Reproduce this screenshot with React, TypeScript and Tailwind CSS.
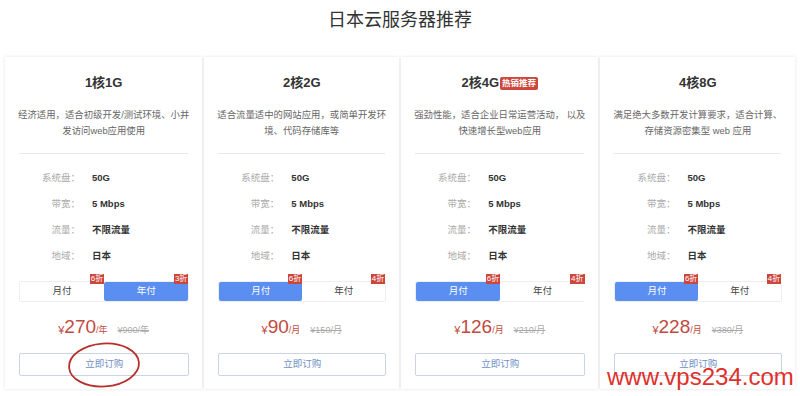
import React from 'react';

interface Plan {
  name: string;
  hot?: boolean;
  desc: string[];
  yearly: boolean;
  price: string;
  unit: string;
  original: string;
  monthOff: string;
  yearOff: string;
}

const plans: Plan[] = [
  {
    name: '1核1G',
    desc: ['经济适用，适合初级开发/测试环境、小并', '发访问web应用使用'],
    yearly: true,
    price: '270',
    unit: '/年',
    original: '¥900/年',
    monthOff: '6折',
    yearOff: '3折',
  },
  {
    name: '2核2G',
    desc: ['适合流量适中的网站应用，或简单开发环', '境、代码存储库等'],
    yearly: false,
    price: '90',
    unit: '/月',
    original: '¥150/月',
    monthOff: '6折',
    yearOff: '4折',
  },
  {
    name: '2核4G',
    hot: true,
    desc: ['强劲性能，适合企业日常运营活动， 以及', '快速增长型web应用'],
    yearly: false,
    price: '126',
    unit: '/月',
    original: '¥210/月',
    monthOff: '6折',
    yearOff: '4折',
  },
  {
    name: '4核8G',
    desc: ['满足绝大多数开发计算要求，适合计算、', '存储资源密集型 web 应用'],
    yearly: false,
    price: '228',
    unit: '/月',
    original: '¥380/月',
    monthOff: '6折',
    yearOff: '4折',
  },
];

const specs = [
  ['系统盘：', '50G'],
  ['带宽：', '5 Mbps'],
  ['流量：', '不限流量'],
  ['地域：', '日本'],
];

const Badge = ({ text }: { text: string }) => (
  <span className="absolute right-0 top-[-8px] bg-[#cc463c] px-[1px] text-[8px] leading-[10px] text-white">
    {text}
  </span>
);

const PlanCard = ({ plan }: { plan: Plan }) => (
  <div className="flex flex-1 flex-col bg-white px-[13px] pb-[13px] pt-[17px] shadow-[0_0_3px_rgba(0,0,0,0.12)]">
    <div className="flex h-[18px] items-center justify-center">
      <span className="text-[13px] font-bold text-[#333]">{plan.name}</span>
      {plan.hot && (
        <span className="ml-[1px] rounded-[2px] bg-[#cc463c] px-[2px] text-[8.5px] font-bold leading-[13px] text-white">
          热销推荐
        </span>
      )}
    </div>
    <div className="mt-[15px] text-center text-[9.4px] leading-[16px] text-[#666]">
      {plan.desc.map((line) => (
        <div key={line} className="whitespace-nowrap">{line}</div>
      ))}
    </div>
    <div className="mx-[1px] mt-[14px] h-px bg-[#e8e8e8]" />
    <div className="mt-[11px] flex flex-col">
      {specs.map(([label, value]) => (
        <div key={label} className="flex h-[26px] items-center text-[9.5px]">
          <span className="w-[62px] text-right text-[#aaa]">{label}</span>
          <span className="ml-[12px] font-bold text-[#333]">{value}</span>
        </div>
      ))}
    </div>
    <div className="ml-[1px] mt-[12px] flex h-[21px] rounded-[2px] border border-[#eee] text-[9.5px]">
      <div
        className={`relative flex flex-1 items-center justify-center ${
          plan.yearly ? 'bg-white text-[#444]' : 'rounded-[2px] bg-[#5a8ef0] text-white'
        }`}
      >
        月付
        <Badge text={plan.monthOff} />
      </div>
      <div
        className={`relative flex flex-1 items-center justify-center ${
          plan.yearly ? 'rounded-[2px] bg-[#5a8ef0] text-white' : 'bg-white text-[#444]'
        }`}
      >
        年付
        <Badge text={plan.yearOff} />
      </div>
    </div>
    <div className="mt-[14px] flex h-[24px] items-end justify-center pb-[3px] text-[#bf4a42]">
      <span className="text-[11px] leading-[14px]">¥</span>
      <span className="text-[19px] leading-[20px]">{plan.price}</span>
      <span className="text-[9px] leading-[14px]">{plan.unit}</span>
      <span className="ml-[10px] text-[9px] leading-[14px] text-[#aaa] line-through">{plan.original}</span>
    </div>
    <button className="ml-[1px] mt-[13px] flex h-[23px] items-center justify-center rounded-[2px] border border-[#c9d5e4] bg-white text-[9.5px] text-[#6f8fc4]">
      立即订购
    </button>
  </div>
);

export default function App() {
  return (
    <div
      className="relative h-[396px] w-[800px] overflow-hidden bg-white"
      style={{ fontFamily: '"Liberation Sans", "Noto Sans CJK SC", sans-serif' }}
    >
      <h1 className="pt-[8px] text-center text-[18px] leading-[24px] text-[#333]">日本云服务器推荐</h1>
      <div className="mt-[25px] flex gap-[2px] px-[5px]">
        {plans.map((p) => (
          <PlanCard key={p.name} plan={p} />
        ))}
      </div>

      {/* annotation circle */}
      <svg className="absolute left-[66px] top-[340px]" width="76" height="50" viewBox="0 0 76 50">
        <ellipse
          cx="38"
          cy="25"
          rx="35"
          ry="21.5"
          fill="none"
          stroke="#b8302c"
          strokeWidth="1.8"
          transform="rotate(-4 38 25)"
        />
      </svg>

      {/* watermark */}
      <div
        className="absolute left-[607px] top-[362px] text-[24px] leading-[30px] text-[#e0302b]"
        style={{ fontFamily: '"Liberation Sans", Arial, sans-serif' }}
      >
        www.vps234.com
      </div>
    </div>
  );
}
